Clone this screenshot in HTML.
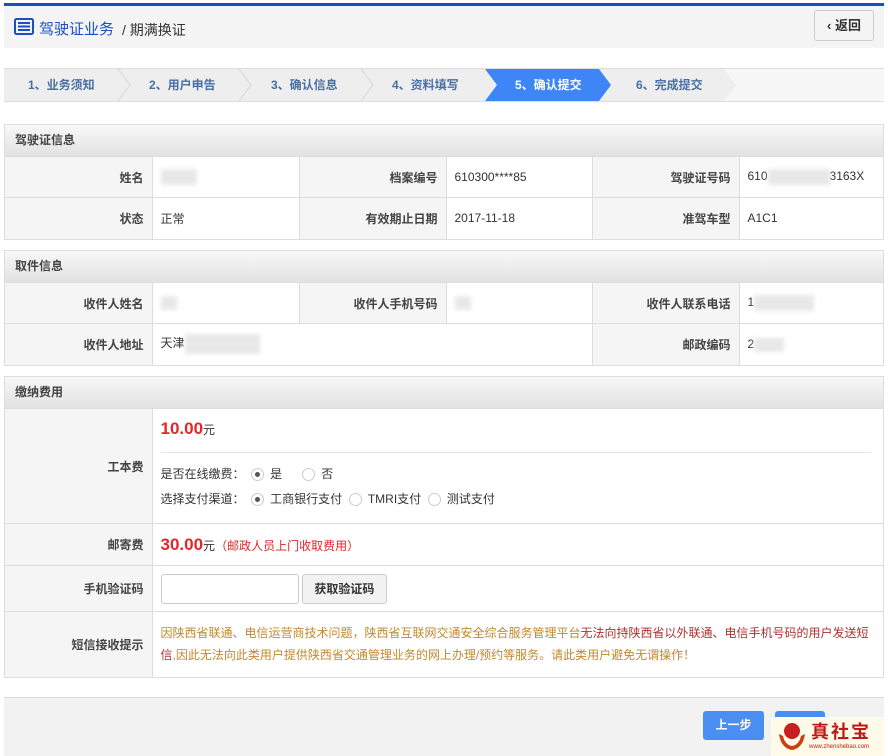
<!DOCTYPE html>
<html><head><meta charset="utf-8"><style>
*{box-sizing:border-box;margin:0;padding:0}
body{width:888px;height:756px;background:#fff;font-family:"Liberation Sans","Noto Sans CJK SC",sans-serif;font-size:12px;color:#333;position:relative;overflow:hidden}
.a{position:absolute}
.hdr{left:4px;top:3px;width:880px;height:45px;background:#f4f4f4;border-top:3px solid #1a4fc0}
.steps{left:4px;top:68px;width:880px;height:34px;background:#f7f7f7;border-top:1px solid #ddd;border-bottom:1px solid #ddd}
.step{position:absolute;top:0;height:32px;line-height:32px;font-weight:bold;color:#4a6fa5;font-size:12px}
.sec{position:absolute;left:4px;width:880px;border:1px solid #ddd}
.sh{height:31px;line-height:31px;padding-left:10px;font-weight:bold;background:linear-gradient(#f8f8f8,#e2e2e2);color:#444}
table{border-collapse:collapse;width:100%}
td{border:1px solid #ddd;height:41px;padding:0 8px}
tr td:first-child{border-left:none}
tr td:last-child{border-right:none}
tr:last-child td{border-bottom:none}
td.l{background:#f5f5f5;text-align:right;font-weight:bold;color:#444;width:147px}
.blur{display:inline-block;background:#e8e8e8;filter:blur(2px);vertical-align:middle}
.red{color:#e2262a;font-weight:bold;font-size:17px}
.rd{display:inline-block;width:13px;height:13px;border:1px solid #ccc;border-radius:50%;vertical-align:middle;margin-right:6px;position:relative}
.rd.on::after{content:"";position:absolute;left:3px;top:3px;width:5px;height:5px;border-radius:50%;background:#555}
</style></head><body>
<div class="a hdr">
 <svg class="a" style="left:10px;top:12px" width="20" height="17" viewBox="0 0 20 17"><rect x="1" y="1" width="18" height="15" rx="1.5" fill="none" stroke="#1a4fc0" stroke-width="2"/><rect x="4" y="4" width="12" height="2" fill="#1a4fc0"/><rect x="4" y="7.5" width="12" height="2" fill="#1a4fc0"/><rect x="4" y="11" width="12" height="2" fill="#1a4fc0"/></svg>
 <span class="a" style="left:35px;top:12px;font-size:15px;color:#1a4fc0">驾驶证业务</span>
 <span class="a" style="left:118px;top:14px;font-size:14px;color:#333">/ 期满换证</span>
 <div class="a" style="left:810px;top:4px;width:60px;height:31px;border:1px solid #ccc;border-radius:3px;background:#f4f4f4;line-height:29px;text-align:center;font-size:13px;font-weight:bold">‹ 返回</div>
</div>
<div class="a steps">
 <svg class="a" style="left:0;top:0" width="880" height="32"><polygon points="0,0 720,0 732,16 720,32 0,32" fill="#eee"/>
 <g stroke="#d6d6d6" fill="none"><path d="M114,0 L126,16 L114,32"/><path d="M235,0 L247,16 L235,32"/><path d="M357,0 L369,16 L357,32"/></g>
 <polygon points="481,0 595,0 607,16 595,32 481,32 493,16" fill="#3e86f5"/></svg>
 <div class="step" style="left:24px">1、业务须知</div>
 <div class="step" style="left:145px">2、用户申告</div>
 <div class="step" style="left:267px">3、确认信息</div>
 <div class="step" style="left:388px">4、资料填写</div>
 <div class="step" style="left:511px;color:#fff">5、确认提交</div>
 <div class="step" style="left:632px">6、完成提交</div>
</div>
<div class="sec" style="top:124px">
 <div class="sh">驾驶证信息</div>
 <table><tr><td class="l">姓名</td><td style="width:147px"><span class="blur" style="width:36px;height:16px"></span></td><td class="l">档案编号</td><td style="width:146px">610300****85</td><td class="l" style="width:146px">驾驶证号码</td><td>610<span class="blur" style="width:62px;height:16px"></span>3163X</td></tr>
 <tr><td class="l">状态</td><td>正常</td><td class="l">有效期止日期</td><td>2017-11-18</td><td class="l">准驾车型</td><td>A1C1</td></tr></table>
</div>
<div class="sec" style="top:250px">
 <div class="sh">取件信息</div>
 <table><tr><td class="l">收件人姓名</td><td style="width:147px"><span class="blur" style="width:16px;height:14px"></span></td><td class="l">收件人手机号码</td><td style="width:146px"><span class="blur" style="width:16px;height:14px"></span></td><td class="l" style="width:146px">收件人联系电话</td><td>1<span class="blur" style="width:60px;height:16px"></span></td></tr>
 <tr><td class="l">收件人地址</td><td colspan="3">天津<span class="blur" style="width:75px;height:20px"></span></td><td class="l">邮政编码</td><td>2<span class="blur" style="width:30px;height:14px"></span></td></tr></table>
</div>
<div class="sec" style="top:376px">
 <div class="sh">缴纳费用</div>
 <table>
 <tr><td class="l" style="height:115px">工本费</td><td style="vertical-align:top;padding-top:10px">
  <div style="height:34px;border-bottom:1px solid #e5e5e5;margin-right:4px"><span class="red">10.00</span>元</div>
  <div style="margin-top:12px">是否在线缴费：&nbsp; <span class="rd on"></span>是 &nbsp; &nbsp; &nbsp;<span class="rd"></span>否</div>
  <div style="margin-top:8px">选择支付渠道： &nbsp;<span class="rd on"></span>工商银行支付 &nbsp;<span class="rd"></span>TMRI支付 &nbsp;<span class="rd"></span>测试支付</div>
 </td></tr>
 <tr><td class="l" style="height:42px">邮寄费</td><td><span class="red">30.00</span>元<span style="color:#e2262a">（邮政人员上门收取费用）</span></td></tr>
 <tr><td class="l" style="height:46px">手机验证码</td><td><span style="display:inline-block;width:138px;height:30px;border:1px solid #ccc;border-radius:3px;vertical-align:middle"></span> <span style="display:inline-block;width:85px;height:30px;border:1px solid #ccc;border-radius:3px;background:#f2f2f2;vertical-align:middle;text-align:center;line-height:28px;font-weight:bold">获取验证码</span></td></tr>
 <tr><td class="l" style="height:65px">短信接收提示</td><td style="line-height:22px;color:#c0892f">因陕西省联通、电信运营商技术问题，陕西省互联网交通安全综合服务管理平台<span style="color:#b03030">无法向持陕西省以外联通、电信手机号码的用户发送短信</span>,因此无法向此类用户提供陕西省交通管理业务的网上办理/预约等服务。请此类用户避免无谓操作！</td></tr>
 </table>
</div>
<div class="a" style="left:4px;top:697px;width:880px;height:59px;background:#f2f2f2;border-top:1px solid #ddd"></div>
<div class="a" style="left:703px;top:711px;width:61px;height:29px;background:#4a8ef2;border-radius:3px;color:#fff;text-align:center;line-height:29px;font-weight:bold">上一步</div>
<div class="a" style="left:775px;top:711px;width:50px;height:29px;background:#4a8ef2;border-radius:3px"></div>
<div class="a" style="left:771px;top:717px;width:113px;height:39px;background:#fffbe8">
 <svg class="a" style="left:6px;top:3px" width="30" height="32"><circle cx="15" cy="11" r="8" fill="#c62020"/><path d="M2 14 Q4 28 15 30 Q26 28 28 14 L24 16 Q22 25 15 26 Q8 25 6 16 Z" fill="#d03a10"/></svg>
 <span class="a" style="left:40px;top:1px;font-size:18px;font-weight:bold;color:#c01818;letter-spacing:2px">真社宝</span>
 <span class="a" style="left:38px;top:27px;font-size:6px;color:#c01818">www.zhenshebao.com</span>
</div>
</body></html>
